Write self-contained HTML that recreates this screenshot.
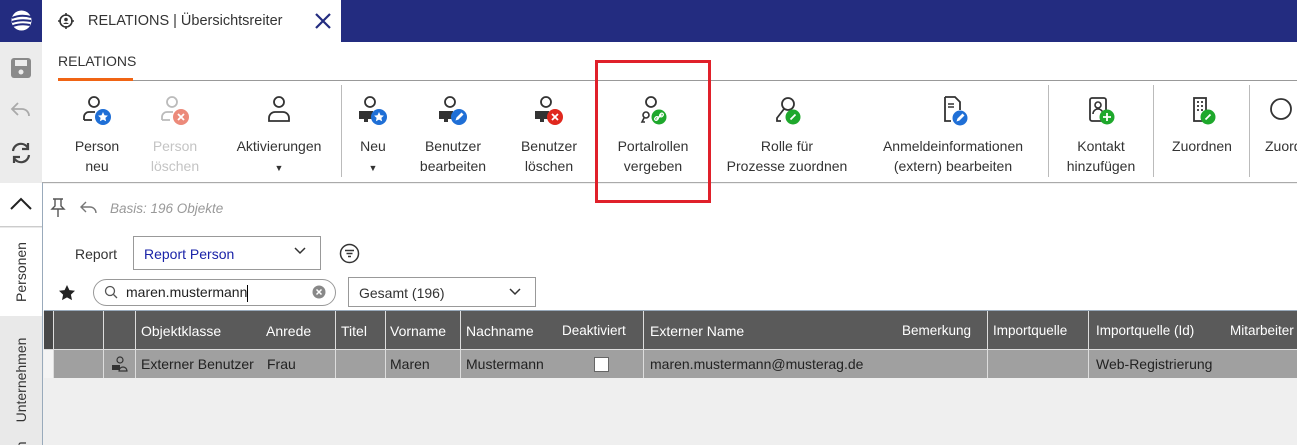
<!DOCTYPE html>
<html><head><meta charset="utf-8"><style>
*{margin:0;padding:0;box-sizing:border-box}
html,body{width:1297px;height:445px;overflow:hidden}
body{background:#f0f0f0;font-family:"Liberation Sans",sans-serif;position:relative;color:#333}
.a{position:absolute}
.wrap{position:absolute;left:0;top:0;width:1297px;height:445px;overflow:hidden}
.btn{position:absolute;top:96px;text-align:center;font-size:14px;line-height:20px;color:#333;white-space:nowrap}
.btn svg{display:block;margin:0 auto 10px}
.sep{position:absolute;top:85px;height:92px;width:1px;background:#bbb}
.th{position:absolute;top:311px;height:39px;line-height:40px;color:#fff;font-size:14px;white-space:nowrap}
.td{position:absolute;top:350px;height:28px;line-height:29px;color:#222;font-size:14px;white-space:nowrap}
.vl{position:absolute;width:1px;background:#ddd}
</style></head><body><div class="wrap">
<!-- top bar -->
<div class="a" style="left:0;top:0;width:1297px;height:42px;background:#232c80"></div>
<svg class="a" style="left:11px;top:10px" width="21" height="21" viewBox="0 0 21 21"><circle cx="10.5" cy="10.5" r="10" fill="#fff"/><path d="M1 8 Q10 4 20 7 M1 12 Q10 9 20 11 M2 16 Q10 13 19 15" stroke="#232c80" stroke-width="2" fill="none"/></svg>
<div class="a" style="left:42px;top:0;width:299px;height:42px;background:#fff"></div>
<svg class="a" style="left:58px;top:13px" width="16" height="16" viewBox="0 0 16 16"><circle cx="8" cy="8" r="6" fill="none" stroke="#333" stroke-width="1.6"/><circle cx="8" cy="6.5" r="1.8" fill="#333"/><path d="M5 11 Q8 8 11 11" fill="#333"/><path d="M8 0v3M8 13v3M0 8h3M13 8h3" stroke="#333" stroke-width="1.6"/></svg>
<div class="a" style="left:88px;top:13px;font-size:14.5px;color:#333">RELATIONS | Übersichtsreiter</div>
<svg class="a" style="left:314px;top:12px" width="18" height="18"><path d="M2 2L16 16M16 2L2 16" stroke="#232c80" stroke-width="2.2"/></svg>
<!-- left strip -->
<div class="a" style="left:0;top:42px;width:42px;height:141px;background:#ececec"></div>
<svg class="a" style="left:11px;top:58px" width="20" height="20"><rect x="0" y="0" width="20" height="20" rx="3" fill="#8a8a8a"/><rect x="4" y="2" width="12" height="6" fill="#ececec"/><circle cx="10" cy="14" r="2.5" fill="#ececec"/></svg>
<svg class="a" style="left:10px;top:101px" width="22" height="18"><path d="M8 2L2 8l6 6M2 8h10a7 7 0 0 1 7 7" stroke="#aaa" stroke-width="1.8" fill="none"/></svg>
<svg class="a" style="left:9px;top:141px" width="24" height="24" viewBox="0 0 24 24"><path d="M4 10a8 8 0 0 1 15-3M20 14a8 8 0 0 1-15 3" stroke="#444" stroke-width="2.2" fill="none"/><path d="M19 2v6h-6M5 22v-6h6" stroke="#444" stroke-width="2.2" fill="none"/></svg>
<!-- ribbon -->
<div class="a" style="left:42px;top:42px;width:1255px;height:141px;background:#fff;border-bottom:1px solid #aaa"></div>
<div class="a" style="left:58px;top:53px;font-size:14px;color:#333">RELATIONS</div>
<div class="a" style="left:133px;top:80px;width:1164px;height:1px;background:#999"></div>
<div class="a" style="left:58px;top:78px;width:75px;height:3px;background:#f06414"></div>

<div class="btn" style="left:62px;width:70px"><svg width="34" height="30" viewBox="0 0 34 30"><circle cx="14" cy="6" r="5" fill="none" stroke="#333" stroke-width="1.8"/><path d="M4 24v-3a5 5 0 0 1 5-5h6" fill="none" stroke="#333" stroke-width="1.8"/><path d="M4 24h8" stroke="#333" stroke-width="1.8"/><circle cx="23" cy="21" r="8" fill="#1f6fd6"/><path d="M23 16l1.5 3.2 3.4.4-2.5 2.3.7 3.4-3.1-1.7-3.1 1.7.7-3.4-2.5-2.3 3.4-.4z" fill="#fff"/></svg>Person<br>neu</div>
<div class="btn" style="left:140px;width:70px;color:#c4c4c4"><svg width="34" height="30" viewBox="0 0 34 30"><circle cx="14" cy="6" r="5" fill="none" stroke="#bbb" stroke-width="1.8"/><path d="M4 24v-3a5 5 0 0 1 5-5h6M4 24h8" fill="none" stroke="#bbb" stroke-width="1.8"/><circle cx="23" cy="21" r="8" fill="#ec8a7a"/><path d="M20 18l6 6M26 18l-6 6" stroke="#fff" stroke-width="1.8"/></svg>Person<br>löschen</div>
<div class="btn" style="left:229px;width:100px"><svg width="34" height="30" viewBox="0 0 34 30"><circle cx="17" cy="6" r="5" fill="none" stroke="#333" stroke-width="1.8"/><path d="M7 25v-3a6 6 0 0 1 6-6h8a6 6 0 0 1 6 6v3z" fill="none" stroke="#333" stroke-width="1.8"/></svg>Aktivierungen<br><span style="font-size:9px">▼</span></div>
<div class="sep" style="left:341px"></div>
<div class="btn" style="left:350px;width:46px"><svg width="34" height="30" viewBox="0 0 34 30"><circle cx="14" cy="6" r="5" fill="none" stroke="#333" stroke-width="1.8"/><rect x="3" y="15" width="14" height="8" fill="#333"/><rect x="8" y="23" width="4" height="3" fill="#333"/><circle cx="23" cy="21" r="8" fill="#1f6fd6"/><path d="M23 16l1.5 3.2 3.4.4-2.5 2.3.7 3.4-3.1-1.7-3.1 1.7.7-3.4-2.5-2.3 3.4-.4z" fill="#fff"/></svg>Neu<br><span style="font-size:9px">▼</span></div>
<div class="btn" style="left:413px;width:80px"><svg width="34" height="30" viewBox="0 0 34 30"><circle cx="14" cy="6" r="5" fill="none" stroke="#333" stroke-width="1.8"/><rect x="3" y="15" width="14" height="8" fill="#333"/><rect x="8" y="23" width="4" height="3" fill="#333"/><circle cx="23" cy="21" r="8" fill="#1f6fd6"/><path d="M19.5 24.5l1-3 5-5 2 2-5 5z" fill="#fff"/></svg>Benutzer<br>bearbeiten</div>
<div class="btn" style="left:510px;width:78px"><svg width="34" height="30" viewBox="0 0 34 30"><circle cx="14" cy="6" r="5" fill="none" stroke="#333" stroke-width="1.8"/><rect x="3" y="15" width="14" height="8" fill="#333"/><rect x="8" y="23" width="4" height="3" fill="#333"/><circle cx="23" cy="21" r="8" fill="#e0281e"/><path d="M20 18l6 6M26 18l-6 6" stroke="#fff" stroke-width="1.8"/></svg>Benutzer<br>löschen</div>
<div class="btn" style="left:600px;width:106px"><svg width="34" height="30" viewBox="0 0 34 30"><circle cx="15" cy="6" r="5" fill="none" stroke="#333" stroke-width="1.8"/><circle cx="10" cy="19" r="3" fill="none" stroke="#333" stroke-width="1.6"/><path d="M8 22l-2 4h3" fill="none" stroke="#333" stroke-width="1.6"/><circle cx="23" cy="21" r="7.5" fill="#1ea82c"/><path d="M20.5 23.5l5-5" stroke="#fff" stroke-width="1.6"/><rect x="18.5" y="21" width="4" height="3" rx="1.5" fill="none" stroke="#fff" stroke-width="1.3" transform="rotate(-45 20.5 22.5)"/><rect x="23.5" y="17.5" width="4" height="3" rx="1.5" fill="none" stroke="#fff" stroke-width="1.3" transform="rotate(-45 25.5 19)"/></svg>Portalrollen<br>vergeben</div>
<div class="btn" style="left:720px;width:134px"><svg width="34" height="30" viewBox="0 0 34 30"><circle cx="18" cy="8" r="6" fill="none" stroke="#333" stroke-width="1.8"/><path d="M14 13l-7 9v3h4" fill="none" stroke="#333" stroke-width="1.8"/><circle cx="23" cy="21" r="7.5" fill="#1ea82c"/><path d="M20.5 23.5l5-5" stroke="#fff" stroke-width="1.8"/></svg>Rolle für<br>Prozesse zuordnen</div>
<div class="btn" style="left:868px;width:170px"><svg width="34" height="30" viewBox="0 0 34 30"><path d="M9 1h10l5 5v8M9 1v24h6" fill="none" stroke="#333" stroke-width="1.8"/><path d="M12 8h6M12 11h6" stroke="#333" stroke-width="1.4"/><circle cx="24" cy="22" r="7.5" fill="#1f6fd6"/><path d="M20.5 25.5l1-3 5-5 2 2-5 5z" fill="#fff"/></svg>Anmeldeinformationen<br>(extern) bearbeiten</div>
<div class="sep" style="left:1048px"></div>
<div class="btn" style="left:1058px;width:86px"><svg width="34" height="30" viewBox="0 0 34 30"><rect x="6" y="2" width="16" height="23" rx="2" fill="none" stroke="#333" stroke-width="1.8"/><circle cx="14" cy="9" r="3" fill="none" stroke="#333" stroke-width="1.6"/><path d="M9 18a5 5 0 0 1 10 0" fill="none" stroke="#333" stroke-width="1.6"/><circle cx="23" cy="21" r="7.5" fill="#1ea82c"/><path d="M23 17v8M19 21h8" stroke="#fff" stroke-width="1.8"/></svg>Kontakt<br>hinzufügen</div>
<div class="sep" style="left:1153px"></div>
<div class="btn" style="left:1162px;width:80px"><svg width="34" height="30" viewBox="0 0 34 30"><rect x="9" y="2" width="12" height="23" fill="none" stroke="#333" stroke-width="1.8"/><path d="M12 6h2M16 6h2M12 10h2M16 10h2M12 14h2M16 14h2" stroke="#333" stroke-width="1.8"/><circle cx="23" cy="21" r="7.5" fill="#1ea82c"/><path d="M20.5 23.5l5-5" stroke="#fff" stroke-width="1.8"/></svg>Zuordnen</div>
<div class="sep" style="left:1249px"></div>
<div class="btn" style="left:1265px;width:32px;text-align:left;overflow:hidden"><svg width="34" height="30" viewBox="0 0 34 30" style="margin:0 0 10px 0"><circle cx="16" cy="13" r="10" fill="none" stroke="#333" stroke-width="1.8"/></svg>Zuordnen</div>

<!-- lower left tabs -->
<div class="a" style="left:0;top:183px;width:43px;height:262px;background:#e9e9e9;border-right:1px solid #9ab;overflow:hidden">
  <div class="a" style="left:0;top:0;width:42px;height:44px;background:#fff;border-bottom:1px solid #ccc"></div>
  <svg class="a" style="left:9px;top:13px" width="24" height="16"><path d="M2 13L12 3l10 10" stroke="#222" stroke-width="2" fill="none"/></svg>
  <div class="a" style="left:0;top:45px;width:42px;height:88px;background:#fff"></div>
  <div class="a" style="left:21px;top:89px;transform:translate(-50%,-50%) rotate(-90deg);font-size:14px;white-space:nowrap">Personen</div>
  <div class="a" style="left:21px;top:197px;transform:translate(-50%,-50%) rotate(-90deg);font-size:14px;white-space:nowrap">Unternehmen</div>
  <div class="a" style="left:21px;top:290px;transform:translate(-50%,-50%) rotate(-90deg);font-size:14px;white-space:nowrap">Kontakten</div>
</div>

<!-- content top area -->
<div class="a" style="left:43px;top:184px;width:1254px;height:127px;background:#fff"></div>
<svg class="a" style="left:50px;top:198px" width="16" height="20"><path d="M3 1h10M5 1v7l-3 3h12l-3-3V1M8 11v8" stroke="#555" stroke-width="1.4" fill="none"/></svg>
<svg class="a" style="left:80px;top:201px" width="18" height="14"><path d="M6 1L1 6l5 5M1 6h9a6 6 0 0 1 6 6" stroke="#777" stroke-width="1.4" fill="none"/></svg>
<div class="a" style="left:110px;top:201px;font-size:13.5px;font-style:italic;color:#999">Basis: 196 Objekte</div>
<div class="a" style="left:75px;top:246px;font-size:14px">Report</div>
<div class="a" style="left:133px;top:236px;width:188px;height:34px;border:1px solid #999;background:#fff"></div>
<div class="a" style="left:144px;top:246px;font-size:14px;color:#1a23a8">Report Person</div>
<svg class="a" style="left:294px;top:247px" width="12" height="8"><path d="M1 1l5 5 5-5" stroke="#333" stroke-width="1.5" fill="none"/></svg>
<svg class="a" style="left:339px;top:243px" width="21" height="21"><circle cx="10.5" cy="10.5" r="9" fill="none" stroke="#333" stroke-width="1.5"/><path d="M6 7.5h9M7.5 10.5h6M9 13.5h3" stroke="#333" stroke-width="1.5"/></svg>
<svg class="a" style="left:58px;top:284px" width="18" height="17"><path d="M9 1l2.4 5.1 5.6.7-4.1 3.8 1.1 5.5L9 13.4l-5 2.7 1.1-5.5L1 6.8l5.6-.7z" fill="#222"/></svg>
<div class="a" style="left:93px;top:279px;width:243px;height:27px;border:1px solid #999;border-radius:14px;background:#fff"></div>
<svg class="a" style="left:104px;top:285px" width="14" height="14"><circle cx="6" cy="6" r="4.5" fill="none" stroke="#555" stroke-width="1.3"/><path d="M9.5 9.5l3.5 3.5" stroke="#555" stroke-width="1.3"/></svg>
<div class="a" style="left:126px;top:284px;font-size:14px;color:#222">maren.mustermann<span style="display:inline-block;width:1px;height:17px;background:#000;vertical-align:middle"></span></div>
<svg class="a" style="left:312px;top:285px" width="14" height="14"><circle cx="7" cy="7" r="6.5" fill="#888"/><path d="M4.5 4.5l5 5M9.5 4.5l-5 5" stroke="#fff" stroke-width="1.5"/></svg>
<div class="a" style="left:348px;top:277px;width:188px;height:30px;border:1px solid #999;background:#fff"></div>
<div class="a" style="left:359px;top:285px;font-size:14px">Gesamt (196)</div>
<svg class="a" style="left:509px;top:288px" width="12" height="8"><path d="M1 1l5 5 5-5" stroke="#333" stroke-width="1.5" fill="none"/></svg>

<!-- table -->
<div class="a" style="left:44px;top:310px;width:1253px;height:1px;background:#9ab"></div>
<div class="a" style="left:44px;top:311px;width:1253px;height:39px;background:#5a5a5a"></div>
<div class="a" style="left:44px;top:311px;width:9px;height:39px;background:#484848"></div>
<div class="a" style="left:53px;top:350px;width:1244px;height:28px;background:#a0a0a0"></div>
<div class="a" style="left:44px;top:350px;width:9px;height:28px;background:#f4f4f4"></div>
<div class="a" style="left:44px;top:378px;width:1253px;height:67px;background:#efefef"></div>
<div class="vl" style="left:53px;top:311px;height:67px"></div>
<div class="vl" style="left:103px;top:311px;height:67px"></div>
<div class="vl" style="left:135px;top:311px;height:67px"></div>
<div class="vl" style="left:335px;top:311px;height:67px"></div>
<div class="vl" style="left:385px;top:311px;height:67px"></div>
<div class="vl" style="left:460px;top:311px;height:67px"></div>
<div class="vl" style="left:643px;top:311px;height:67px"></div>
<div class="vl" style="left:987px;top:311px;height:67px"></div>
<div class="vl" style="left:1088px;top:311px;height:67px"></div>
<div class="a" style="left:44px;top:349px;width:1253px;height:1px;background:#ddd"></div>
<div class="th" style="left:141px">Objektklasse</div>
<div class="th" style="left:266px">Anrede</div>
<div class="th" style="left:341px">Titel</div>
<div class="th" style="left:390px">Vorname</div>
<div class="th" style="left:466px">Nachname</div>
<div class="th" style="left:562px;font-size:13.5px">Deaktiviert</div>
<div class="th" style="left:650px">Externer Name</div>
<div class="th" style="left:902px;font-size:13.5px">Bemerkung</div>
<div class="th" style="left:993px;font-size:13.5px">Importquelle</div>
<div class="th" style="left:1096px;font-size:13.5px">Importquelle (Id)</div>
<div class="th" style="left:1230px;font-size:13.5px">Mitarbeiter</div>
<svg class="a" style="left:110px;top:355px" width="18" height="18"><circle cx="10" cy="5" r="3" fill="none" stroke="#333" stroke-width="1.2"/><rect x="2" y="10" width="8" height="5" fill="#333"/><path d="M9 16a4 4 0 0 1 8 0z" fill="none" stroke="#333" stroke-width="1.2"/></svg>
<div class="td" style="left:141px">Externer Benutzer</div>
<div class="td" style="left:267px">Frau</div>
<div class="td" style="left:390px">Maren</div>
<div class="td" style="left:466px">Mustermann</div>
<div class="a" style="left:594px;top:357px;width:15px;height:15px;background:#fff;border:1px solid #666"></div>
<div class="td" style="left:650px">maren.mustermann@musterag.de</div>
<div class="td" style="left:1096px">Web-Registrierung</div>

<!-- red highlight box on top -->
<div class="a" style="left:595px;top:60px;width:116px;height:143px;border:3px solid #e0202a"></div>
</div></body></html>
